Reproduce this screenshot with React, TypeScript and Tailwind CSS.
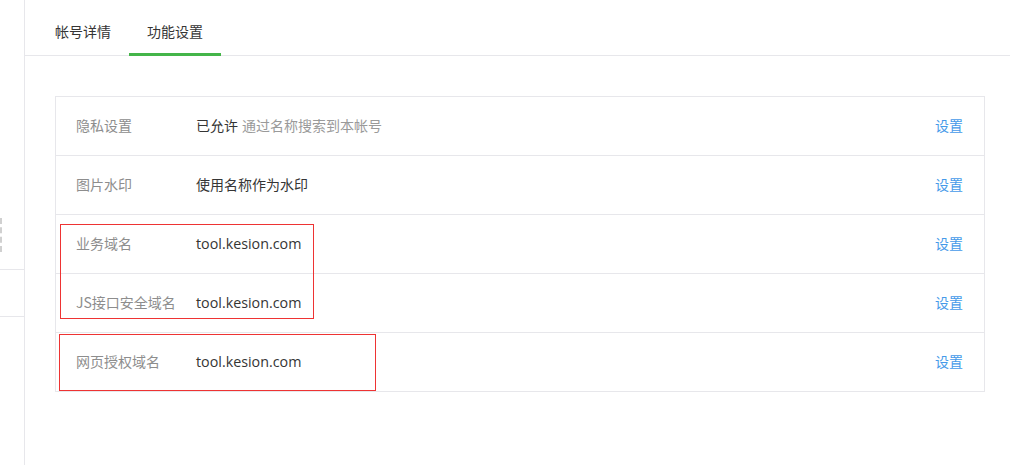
import React from 'react';

const font = '"Microsoft YaHei", "Noto Sans CJK SC", "Noto Sans", sans-serif';

interface Row {
	label: string;
	value: React.ReactNode;
	domain?: boolean;
}

const rows: Row[] = [
	{
		label: '隐私设置',
		value: (
			<>
				<span className="text-[#353535]">已允许</span>
				<span className="ml-1 text-[#9a9a9a]">通过名称搜索到本帐号</span>
			</>
		),
	},
	{ label: '图片水印', value: <span className="text-[#353535]">使用名称作为水印</span> },
	{ label: '业务域名', value: 'tool.kesion.com', domain: true },
	{ label: 'JS接口安全域名', value: 'tool.kesion.com', domain: true },
	{ label: '网页授权域名', value: 'tool.kesion.com', domain: true },
];

export default function App() {
	return (
		<div className="flex h-[465px] w-full bg-white overflow-hidden" style={{ fontFamily: font }}>
			{/* left strip */}
			<div className="relative w-[25px] shrink-0 border-r border-[#e7e7eb]">
				<div className="absolute left-0 top-[218px] h-[34px] border-l-2 border-dashed border-[#d0d0d0]" />
				<div className="absolute left-0 top-[269px] w-full border-t border-[#e7e7eb]" />
				<div className="absolute left-0 top-[316px] w-full border-t border-[#e7e7eb]" />
			</div>

			<div className="flex-1 min-w-0">
				{/* tabs */}
				<div className="flex h-[56px] border-b border-[#e7e7eb] pl-3 text-[14px]">
					<div className="flex items-center px-[18px] pt-[7px] text-[#353535]">帐号详情</div>
					<div className="relative flex items-center px-[18px] pt-[7px] text-[#353535]">
						功能设置
						<span className="absolute left-0 right-0 -bottom-px h-[3px] bg-[#44b549]" />
					</div>
				</div>

				{/* settings table */}
				<div className="relative ml-[30px] mr-[25px] mt-[40px] border border-[#e7e7eb]">
					{rows.map((r, i) => (
						<div
							key={i}
							className={
								i > 0
									? 'flex h-[59px] items-center border-t border-[#e7e7eb] pl-5 pr-5 pb-[2px] text-[14px]'
									: 'flex h-[58px] items-center pl-5 pr-5 pb-[2px] text-[14px]'
							}
						>
							<div className="w-[120px] shrink-0 text-[#8d8d8d]">{r.label}</div>
							<div className="flex-1">
								{r.domain ? (
									<span className="relative top-px text-[14.3px] text-[#353535]" style={{ fontFamily: '"Segoe UI", "Open Sans", "Noto Sans", sans-serif' }}>
										{r.value}
									</span>
								) : (
									r.value
								)}
							</div>
							<a className="mr-px text-[#459ae9] cursor-pointer">设置</a>
						</div>
					))}

					{/* annotation boxes */}
					<div className="absolute left-[4px] top-[127px] h-[95px] w-[254px] border border-[#ee3333]" />
					<div className="absolute left-[3px] top-[237px] h-[57px] w-[317px] border border-[#ee3333]" />
				</div>
			</div>
		</div>
	);
}
